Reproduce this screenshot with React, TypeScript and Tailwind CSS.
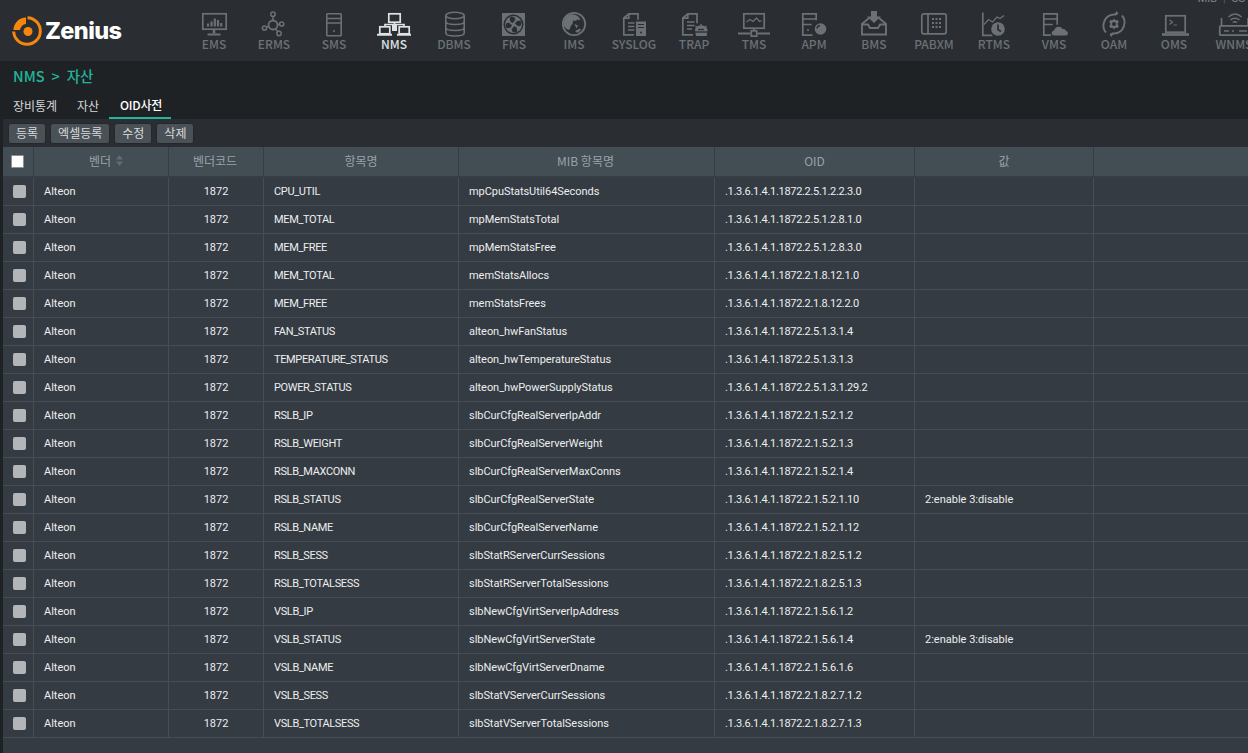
import React from "react";

const KR = "font-['Noto_Sans_CJK_KR','Noto_Sans',sans-serif]";
const BG = "#2a2e33";

type Row = [string, string, string, string?];

const rows: Row[] = [
  ["CPU_UTIL", "mpCpuStatsUtil64Seconds", ".1.3.6.1.4.1.1872.2.5.1.2.2.3.0"],
  ["MEM_TOTAL", "mpMemStatsTotal", ".1.3.6.1.4.1.1872.2.5.1.2.8.1.0"],
  ["MEM_FREE", "mpMemStatsFree", ".1.3.6.1.4.1.1872.2.5.1.2.8.3.0"],
  ["MEM_TOTAL", "memStatsAllocs", ".1.3.6.1.4.1.1872.2.1.8.12.1.0"],
  ["MEM_FREE", "memStatsFrees", ".1.3.6.1.4.1.1872.2.1.8.12.2.0"],
  ["FAN_STATUS", "alteon_hwFanStatus", ".1.3.6.1.4.1.1872.2.5.1.3.1.4"],
  ["TEMPERATURE_STATUS", "alteon_hwTemperatureStatus", ".1.3.6.1.4.1.1872.2.5.1.3.1.3"],
  ["POWER_STATUS", "alteon_hwPowerSupplyStatus", ".1.3.6.1.4.1.1872.2.5.1.3.1.29.2"],
  ["RSLB_IP", "slbCurCfgRealServerIpAddr", ".1.3.6.1.4.1.1872.2.1.5.2.1.2"],
  ["RSLB_WEIGHT", "slbCurCfgRealServerWeight", ".1.3.6.1.4.1.1872.2.1.5.2.1.3"],
  ["RSLB_MAXCONN", "slbCurCfgRealServerMaxConns", ".1.3.6.1.4.1.1872.2.1.5.2.1.4"],
  ["RSLB_STATUS", "slbCurCfgRealServerState", ".1.3.6.1.4.1.1872.2.1.5.2.1.10", "2:enable 3:disable"],
  ["RSLB_NAME", "slbCurCfgRealServerName", ".1.3.6.1.4.1.1872.2.1.5.2.1.12"],
  ["RSLB_SESS", "slbStatRServerCurrSessions", ".1.3.6.1.4.1.1872.2.1.8.2.5.1.2"],
  ["RSLB_TOTALSESS", "slbStatRServerTotalSessions", ".1.3.6.1.4.1.1872.2.1.8.2.5.1.3"],
  ["VSLB_IP", "slbNewCfgVirtServerIpAddress", ".1.3.6.1.4.1.1872.2.1.5.6.1.2"],
  ["VSLB_STATUS", "slbNewCfgVirtServerState", ".1.3.6.1.4.1.1872.2.1.5.6.1.4", "2:enable 3:disable"],
  ["VSLB_NAME", "slbNewCfgVirtServerDname", ".1.3.6.1.4.1.1872.2.1.5.6.1.6"],
  ["VSLB_SESS", "slbStatVServerCurrSessions", ".1.3.6.1.4.1.1872.2.1.8.2.7.1.2"],
  ["VSLB_TOTALSESS", "slbStatVServerTotalSessions", ".1.3.6.1.4.1.1872.2.1.8.2.7.1.3"],
];

// nav icons: 1 unit = 1px, viewBox -3..31 wide, 0..26 tall, x=14 is the item centre
const icons: Record<string, React.ReactNode> = {
  EMS: (
    <>
      <rect x="2.800" y="2.800" width="23.400" height="15.400" strokeWidth="1.700" />
      <path d="M14 18.500v4" strokeWidth="2.500" />
      <path d="M7.500 23.500h13" strokeWidth="2" />
      <path d="M8 15.500v-3M11.500 15.500v-5M14.800 15.500V7.500M18 15.500V9M21.200 15.500v-3.500" strokeWidth="2.200" />
    </>
  ),
  ERMS: (
    <>
      <circle cx="13" cy="14" r="4.500" strokeWidth="1.800" />
      <circle cx="13" cy="3.300" r="2.200" strokeWidth="1.500" />
      <circle cx="4.500" cy="17" r="2.100" strokeWidth="1.500" />
      <circle cx="21.700" cy="13" r="2.100" strokeWidth="1.500" />
      <circle cx="19" cy="22.500" r="2.200" strokeWidth="1.500" />
      <path d="M13 5.500v4M6.500 16.300l2.300-.9M17.500 13.600l2-.3M15.500 18l2.300 2.600" strokeWidth="1.500" />
    </>
  ),
  SMS: (
    <>
      <rect x="6.800" y="2.800" width="14.400" height="22" rx=".8" strokeWidth="1.600" />
      <path d="M7 7.500h14M7 12h14" strokeWidth="1.500" />
      <circle cx="14" cy="20" r="1" fill="currentColor" stroke="none" />
    </>
  ),
  NMS: (
    <>
      <rect x="8.800" y="2.800" width="11.400" height="8.400" strokeWidth="1.700" />
      <path d="M14.500 11v6" strokeWidth="1.700" />
      <path d="M5 15v-1.500h19V15" strokeWidth="1.700" />
      <rect x="12" y="14" width="5" height="6" fill="currentColor" stroke="none" />
      <rect x="-.2" y="15.800" width="10" height="7" strokeWidth="1.700" />
      <rect x="19.200" y="15.800" width="10" height="7" strokeWidth="1.700" />
      <path d="M-3 23.700h15M17 23.700h14" strokeWidth="2" />
    </>
  ),
  DBMS: (
    <>
      <ellipse cx="15" cy="4.500" rx="9.200" ry="3.200" strokeWidth="1.600" />
      <path d="M5.800 4.500v17.500c0 1.800 4 3 9.200 3s9.200-1.200 9.200-3V4.500M5.800 10.500c0 1.800 4 3 9.200 3s9.200-1.200 9.200-3M5.800 16.500c0 1.800 4 3 9.200 3s9.200-1.200 9.200-3" strokeWidth="1.600" />
    </>
  ),
  FMS: (
    <>
      <rect x="2" y="2" width="23" height="23" fill="currentColor" stroke="none" />
      <circle cx="13.500" cy="13.500" r="10" fill={BG} stroke="none" />
      <circle cx="13.500" cy="13.500" r="8.500" fill="currentColor" stroke="none" />
      <path d="M12.800 12c-2.800-1-3.600-3.200-2.600-6 3-1 5.500.2 5 3zM15 12.800c1-2.800 3.200-3.600 6-2.600 1 3-.2 5.500-3 5zM14.200 15c2.800 1 3.600 3.200 2.600 6-3 1-5.500-.2-5-3zM12 14.200c-1 2.800-3.200 3.600-6 2.600-1-3 .2-5.500 3-5z" fill={BG} stroke="none" />
    </>
  ),
  IMS: (
    <>
      <circle cx="14" cy="13" r="11.200" strokeWidth="1.800" />
      <path d="M10 3.500C5 5 3 10 4 15c1.500 2.500 3 3.500 5 4 1.500-1 1-3.500 2.500-5 2-1.500 1-3 1.500-4.500 1.500.5 3.500.5 4.500-1 1 .5 2 .5 3 0C18 4 14 2.800 10 3.500z" fill="currentColor" stroke="none" />
      <path d="M14.500 13l3.500 1.500-1.500 3zM15 20l5-2.500 1 1.500-3.500 3z" fill="currentColor" stroke="none" />
    </>
  ),
  SYSLOG: (
    <>
      <path d="M14 23.800H3.800V7l5-4.200H18v6M3.800 7.200h5V2.800" strokeWidth="1.700" />
      <path d="M8 12h6.500M8 15.500h6.500M8 19h6.500" strokeWidth="1.500" />
      <rect x="16" y="10.500" width="10" height="14.500" fill="currentColor" stroke="none" />
      <path d="M18 13.500h6M18 16.500h6" stroke={BG} strokeWidth="1.200" />
      <circle cx="21" cy="21.500" r="1" fill={BG} stroke="none" />
    </>
  ),
  TRAP: (
    <>
      <path d="M13 23.800H2.800V7l5-4.200H17v9.500M2.800 7.200h5V2.800" strokeWidth="1.700" />
      <path d="M7 11h7.500M7 14.500h7.500M7 18h5" strokeWidth="1.500" />
      <path d="M15 19.500c0-3 2.500-5 6-5s6.500 2 6.500 5l-.8 5.500H16z" fill="currentColor" stroke="none" />
      <path d="M21 13v2M15.500 15l1.500 1.500M26.500 15L25 16.500" strokeWidth="1.300" />
      <path d="M14.500 21h13" stroke={BG} strokeWidth="1.300" />
      <path d="M18 18.500h6" stroke={BG} strokeWidth="1.300" />
    </>
  ),
  TMS: (
    <>
      <rect x="3.800" y="2.800" width="20.400" height="14.400" strokeWidth="1.700" />
      <path d="M6.500 11l3.500-2.500 3 2 3.500-3.500 3 3.500 2-1" strokeWidth="1.200" />
      <path d="M14 17.500v2M-2 22.500h12.500M17.500 22.500H30" strokeWidth="1.800" />
      <rect x="11.300" y="19.800" width="5.400" height="5.400" strokeWidth="1.700" />
    </>
  ),
  APM: (
    <>
      <path d="M12.500 24.200H2.800V2.800h13.400v6.500M2.800 8h13.400M2.800 13.500h9" strokeWidth="1.700" />
      <circle cx="8" cy="19" r="1.100" fill="currentColor" stroke="none" />
      <circle cx="20.500" cy="18" r="7" fill={BG} stroke="none" />
      <circle cx="20.500" cy="18" r="5.800" fill="currentColor" stroke="none" />
      <path d="M17 17.500a3.500 3.500 0 0 1 3-3" stroke={BG} strokeWidth="1.500" />
    </>
  ),
  BMS: (
    <>
      <path d="M9 7L2 13v10.500h24V13l-7-6" strokeWidth="1.900" />
      <path d="M2 13.500h6l2 3.500h8l2-3.500h6" strokeWidth="1.900" />
      <path d="M11 0h6v5.500h4L14 12 7 5.500h4z" fill="currentColor" stroke="none" />
    </>
  ),
  PABXM: (
    <>
      <rect x="1.800" y="2.800" width="24.400" height="20" rx="2" strokeWidth="1.700" />
      <path d="M8 3v19.500" strokeWidth="1.700" />
      <path d="M12 7h2v2h-2zM15.500 7h2v2h-2zM19 7h2v2h-2zM12 11h2v2h-2zM15.500 11h2v2h-2zM19 11h2v2h-2zM12 15h2v2h-2zM15.500 15h2v2h-2zM19 15h2v2h-2z" fill="currentColor" stroke="none" />
    </>
  ),
  RTMS: (
    <>
      <path d="M2.800 1.500v22.800h9.500" strokeWidth="1.700" />
      <path d="M4 13.500l4.500-5 4 2.500 4.500-5 3 1.500 4-3" strokeWidth="1.200" />
      <circle cx="18" cy="18" r="6.800" fill="currentColor" stroke="none" />
      <path d="M18 13.500v5l3 2" stroke={BG} strokeWidth="1.700" />
    </>
  ),
  VMS: (
    <>
      <path d="M11 24.200H3.800V2.800h13.400v11M3.800 8h13.400M3.800 13.500h9" strokeWidth="1.700" />
      <path d="M14 24.500c-3 0-3.200-4.500.2-5 .3-4 6.300-5.500 8.300-1.500 2.500-.5 3.500 1 3.500 2 2.800.3 2.500 4.500 0 4.500z" fill="currentColor" stroke="none" />
    </>
  ),
  OAM: (
    <>
      <path d="M6 21.500C1 16 3.500 4 14 3.500l3.500-1.500M22 4.500c5 5.500 2.500 17.500-8 18l-3.500 1.500" strokeWidth="1.900" />
      <path d="M16.500 .5l1.500 2-2.500 1.800zM11.500 25.500l-1.500-2 2.500-1.800z" fill="currentColor" stroke="currentColor" strokeWidth="1" />
      <path d="M14 7.500l1.400 1.800 2.300-.3 1 2-1.200 2 1.200 2-1 2-2.300-.3L14 18.500l-1.400-1.800-2.300.3-1-2 1.200-2-1.200-2 1-2 2.300.3z" fill="currentColor" stroke="none" />
      <circle cx="14" cy="13" r="2" fill={BG} stroke="none" />
    </>
  ),
  OMS: (
    <>
      <rect x="5.800" y="4.800" width="19.400" height="16.400" strokeWidth="1.700" />
      <path d="M9.500 9l3 2.300-3 2.300M13.500 14h3.500" strokeWidth="1.200" />
      <path d="M2 23.500h27" strokeWidth="2.600" />
    </>
  ),
  WNMS: (
    <>
      <rect x="-.2" y="14.800" width="30" height="9.400" rx="1" strokeWidth="1.800" />
      <path d="M1.500 15V7M28 15V7M4 20h5M12 20h2M19 20h8" strokeWidth="1.700" />
      <path d="M8.500 6c4-4 9-4 13 0M10.500 9c2.500-2.200 6.500-2.200 9 0M12.800 11.500c1.300-1 3-1 4.400 0" strokeWidth="1.500" />
    </>
  ),
};

const navItems = Object.keys(icons);

function NavItem({ name }: { name: string }) {
  const active = name === "NMS";
  return (
    <div className={`flex w-[60px] shrink-0 flex-col items-center ${active ? "text-[#dfe1e3]" : "text-[#6c7176]"}`}>
      <svg width="34" height="26" viewBox="-3 0 34 26" fill="none" stroke="currentColor" className="mt-[11px] shrink-0">
        {icons[name]}
      </svg>
      <span className={`${KR} whitespace-nowrap text-[12px] font-medium leading-[14px]`}>{name}</span>
    </div>
  );
}

function Logo() {
  return (
    <div className="flex items-center gap-[3px]">
      <svg width="30" height="30" viewBox="0 0 30 30" fill="none" className="shrink-0">
        <path d="M15.500 1.700A13.300 13.300 0 1 1 1.700 15.500" stroke="#f7860f" strokeWidth="3" />
        <path d="M1.500 14A12.500 12.500 0 0 1 14 1.500V8A6.500 6.500 0 0 0 8 14Z" fill="#f7860f" />
        <circle cx="16" cy="15.500" r="4.500" fill="#f7860f" />
      </svg>
      <span className="font-['Inter',sans-serif] text-[23.500px] font-extrabold leading-none tracking-[-0.6px] text-white">Zenius</span>
    </div>
  );
}

function Btn({ label }: { label: string }) {
  return (
    <button className={`${KR} h-[21px] rounded-[3px] border border-[#24282c] bg-[#4a5257] px-[7px] text-[12px] leading-none text-[#d8dadb]`}>
      {label}
    </button>
  );
}

const headCell = "border-r border-[#363e44] pb-[2px] text-center text-[12px] font-normal text-[#98a2a8]";
const bodyCell = "border-r border-b border-[#474d53] pl-[10px] pt-[2px] text-left";

export default function App() {
  return (
    <div className="relative h-[753px] w-[1248px] overflow-hidden bg-[#1f2225] font-['Roboto',sans-serif]">
      <div className="h-[61px] bg-[#2a2e33]">
        <div className="flex h-full">
          <div className="flex h-full w-[184px] shrink-0 items-center pl-[12px] pt-[1px]">
            <Logo />
          </div>
          <div className="flex h-full">
            {navItems.map((n) => (
              <NavItem key={n} name={n} />
            ))}
          </div>
        </div>
      </div>
      <div className="absolute right-[3px] top-[-8px] text-[11px] leading-[14px] text-[#81868b]">
        MIB <span className="mx-[3px] text-[#5b6065]">|</span> CS
      </div>

      <div className={`${KR} flex h-[31px] items-center pb-[2px] pl-[13px] text-[14.500px] font-medium text-[#22b59a]`}>
        NMS <span className="mx-[7px]">&gt;</span> 자산
      </div>

      <div className={`${KR} flex h-[27px] items-end pl-[3px] text-[12px] text-[#d5d8da]`}>
        <div className="flex h-[27px] w-[64px] items-center justify-center">장비통계</div>
        <div className="flex h-[27px] w-[42px] items-center justify-center">자산</div>
        <div className="flex h-[27px] w-[62px] items-center justify-center border-b-2 border-[#22b59a] pl-[2px] font-medium tracking-[-0.2px] text-white">OID사전</div>
      </div>

      <div className="ml-[3px] flex h-[28px] items-center gap-[4px] bg-[#2a2e33] pl-[5px]">
        <Btn label="등록" />
        <Btn label="엑셀등록" />
        <Btn label="수정" />
        <Btn label="삭제" />
      </div>

      <div className="ml-[3px] h-[606px] bg-[#353b42]">
        <table className="w-full table-fixed border-collapse text-[11px] text-[#eceeef]">
          <colgroup>
            <col className="w-[30.500px]" />
            <col className="w-[135px]" />
            <col className="w-[95px]" />
            <col className="w-[195px]" />
            <col className="w-[256px]" />
            <col className="w-[200px]" />
            <col className="w-[179px]" />
            <col />
          </colgroup>
          <thead>
            <tr className={`${KR} h-[30px] border-b-[2px] border-[#363e44] bg-[#434d54]`}>
              <th className={headCell}>
                <div className="ml-[8px] mt-[2px] h-[13px] w-[13px] rounded-[1px] border border-[#8b9196] bg-white" />
              </th>
              <th className={headCell}>
                <span className="inline-flex items-center gap-[5px] pl-[10px]">
                  벤더
                  <svg width="7" height="11" viewBox="0 0 7 11" fill="#626b71">
                    <path d="M3.500 0L7 4.500H0zM3.500 11L0 6.500h7z" />
                  </svg>
                </span>
              </th>
              <th className={`${headCell} pr-[2px]`}>벤더코드</th>
              <th className={headCell}>항목명</th>
              <th className={`${headCell} pr-[2px]`}>MIB 항목명</th>
              <th className={headCell}>OID</th>
              <th className={headCell}>값</th>
              <th className="" />
            </tr>
          </thead>
          <tbody>
            {rows.map(([name, mib, oid, value], i) => (
              <tr key={i} className="h-[28px]">
                <td className="border-r border-b border-[#474d53]">
                  <div className="ml-[10px] h-[13px] w-[13px] rounded-[2px] bg-[#b3b6b9]" />
                </td>
                <td className={bodyCell}>Alteon</td>
                <td className="border-r border-b border-[#474d53] pt-[2px] text-center">1872</td>
                <td className={`${bodyCell} tracking-[-0.35px]`}>{name}</td>
                <td className={`${bodyCell} tracking-[-0.05px]`}>{mib}</td>
                <td className={`${bodyCell} tracking-[-0.3px]`}>{oid}</td>
                <td className={bodyCell}>{value}</td>
                <td className="border-b border-[#474d53]" />
              </tr>
            ))}
          </tbody>
        </table>
      </div>
    </div>
  );
}
